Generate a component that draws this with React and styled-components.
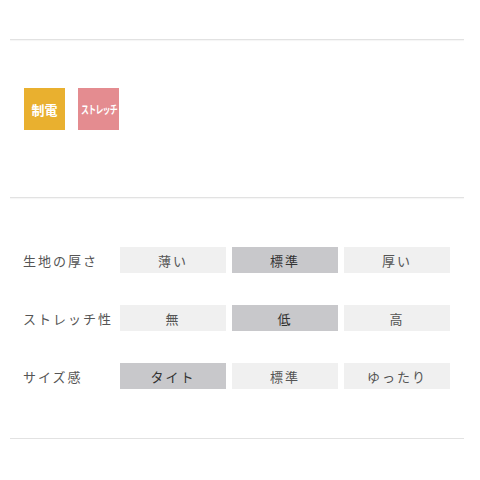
import React from 'react'
import styled, { createGlobalStyle } from 'styled-components'

const GlobalStyle = createGlobalStyle`
    body{
        margin: 0;
        background: #fff;
        font-family: "Noto Sans CJK JP", "Noto Sans", sans-serif;
    }
`

const specs = [
    { label: '生地の厚さ', options: ['薄い', '標準', '厚い'], selected: 1 },
    { label: 'ストレッチ性', options: ['無', '低', '高'], selected: 1 },
    { label: 'サイズ感', options: ['タイト', '標準', 'ゆったり'], selected: 0 },
]

const App = () => {
  return (
    <>
    <GlobalStyle />
    <Container>
        <Divider />
        <Badges>
            <Badge $color="#e9b02f">制電</Badge>
            <Badge $color="#e48c90"><Squeezed>ストレッチ</Squeezed></Badge>
        </Badges>
        <Divider />
        <Specs>
            {specs.map((spec)=>(
                <Row key={spec.label}>
                    <Label>{spec.label}</Label>
                    <Options>
                        {spec.options.map((opt,index)=>(
                            <Option key={opt} $active={index===spec.selected}>{opt}</Option>
                        ))}
                    </Options>
                </Row>
            ))}
        </Specs>
        <Divider />
    </Container>
    </>
  )
}

const Container = styled.div`
    width: 454px;
    padding: 39px 0 0 10px;
    display: flex;
    flex-direction: column;
`
const Divider = styled.div`
    height: 1px;
    background-color: #e2e2e2;
    box-shadow: 0 1px 1px #f4f4f4;
`
const Badges = styled.div`
    display: flex;
    gap: 13px;
    padding: 48px 0 67px 14px;
`
const Badge = styled.div`
    width: 41px;
    height: 42px;
    background-color: ${p=>p.$color};
    color: #fff;
    font-weight: 700;
    font-size: 13px;
    display: flex;
    align-items: center;
    justify-content: center;
    white-space: nowrap;
    overflow: hidden;
`
const Squeezed = styled.span`
    font-size: 11px;
    letter-spacing: -1px;
    display: inline-block;
    transform: scaleX(0.72);
`
const Specs = styled.div`
    display: flex;
    flex-direction: column;
    gap: 32px;
    padding: 49px 0 49px 0;
`
const Row = styled.div`
    display: flex;
    align-items: center;
    padding-left: 13px;
`
const Label = styled.div`
    width: 97px;
    font-size: 13px;
    letter-spacing: 2px;
    color: #555;
    white-space: nowrap;
`
const Options = styled.div`
    display: grid;
    grid-template-columns: repeat(3, 106px);
    gap: 6px;
`
const Option = styled.div`
    height: 26px;
    display: flex;
    align-items: center;
    justify-content: center;
    font-size: 13px;
    letter-spacing: 2px;
    color: ${p=>p.$active ? '#333' : '#555'};
    background-color: ${p=>p.$active ? '#c8c8cb' : '#f0f0f0'};
`

export default App
